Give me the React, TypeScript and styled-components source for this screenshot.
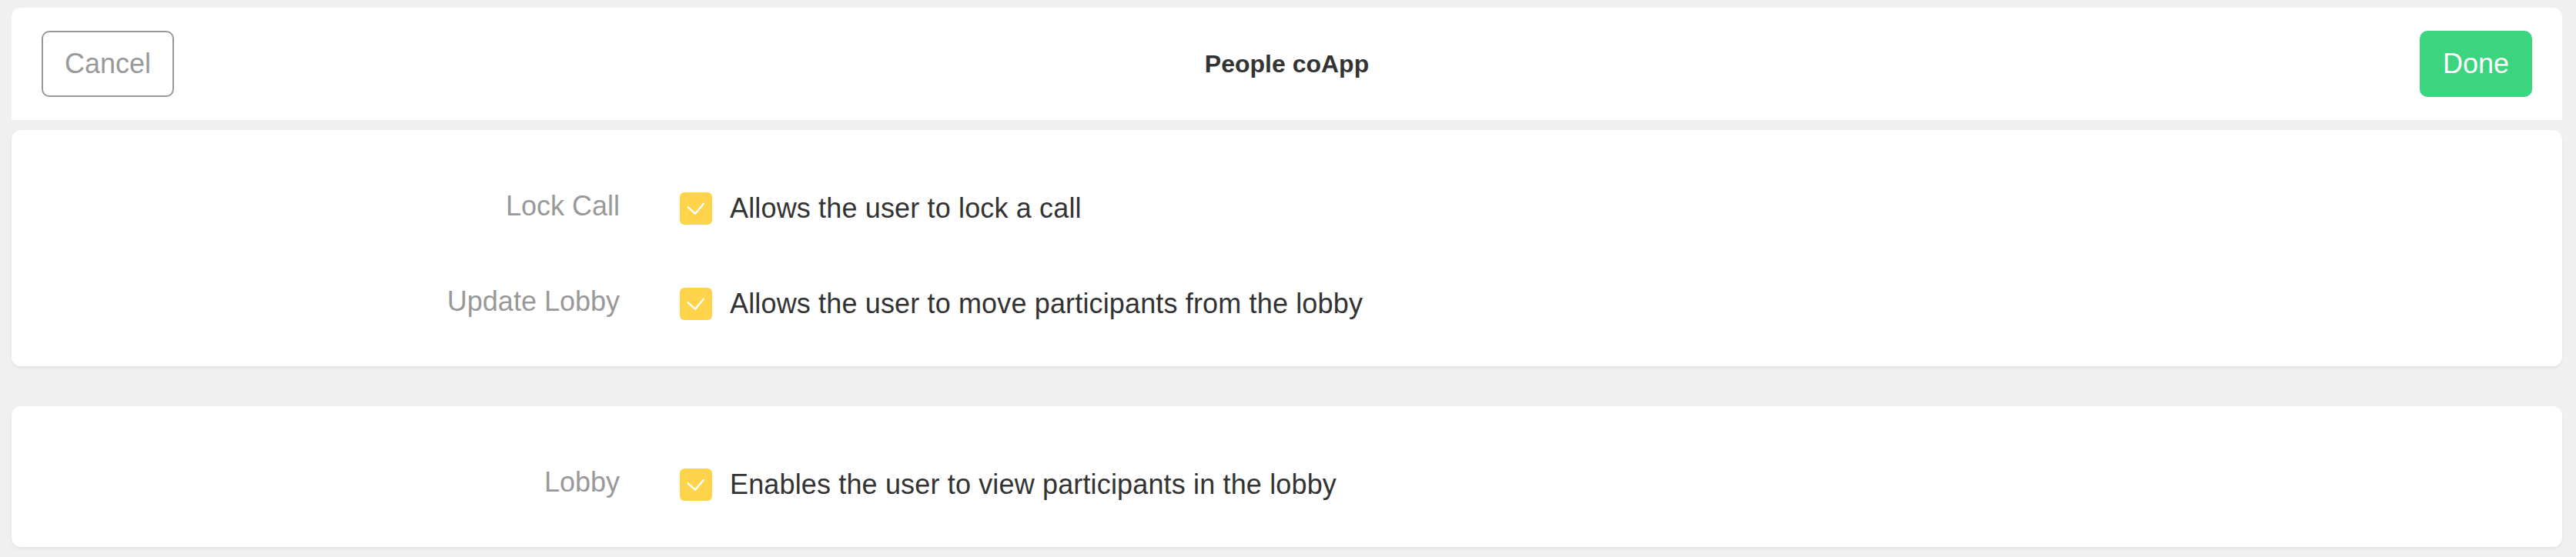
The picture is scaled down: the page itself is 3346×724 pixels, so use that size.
import styled, { createGlobalStyle } from "styled-components";

const GlobalStyle = createGlobalStyle`
  html, body {
    margin: 0;
    padding: 0;
    background: #f0f0f0;
  }
  body {
    font-family: "Liberation Sans", Helvetica, Arial, sans-serif;
  }
  * {
    box-sizing: border-box;
  }
`;

const Page = styled.main`
  padding: 10px 18px 13px 15px;
  display: flex;
  flex-direction: column;
`;

// --- Top bar ---

const TopBar = styled.header`
  height: 146px;
  background: #ffffff;
  border-radius: 12px 12px 0 0;
  padding: 0 39px;
  display: grid;
  grid-template-columns: 1fr auto 1fr;
  align-items: center;
`;

const Title = styled.h1`
  margin: 0;
  font-size: 32px;
  font-weight: 700;
  color: #333333;
`;

const Button = styled.button<{ $primary?: boolean }>`
  height: 86px;
  font-family: inherit;
  font-size: 36px;
  border-radius: 10px;
  cursor: pointer;
  padding: 0 ${(p) => (p.$primary ? "30px" : "28px")};
  border: ${(p) => (p.$primary ? "none" : "2px solid #999999")};
  background: ${(p) => (p.$primary ? "#3bd47f" : "#ffffff")};
  color: ${(p) => (p.$primary ? "#ffffff" : "#999999")};
`;

const Left = styled.div`
  justify-self: start;
`;

const Right = styled.div`
  justify-self: end;
`;

// --- Permission cards ---

const Card = styled.section<{ $gapTop: number }>`
  margin-top: ${(p) => p.$gapTop}px;
  background: #ffffff;
  border-radius: 12px;
  box-shadow: 0 2px 4px rgba(0, 0, 0, 0.06);
  padding: 81px 0 60px;
  display: flex;
  flex-direction: column;
  gap: 82px;
`;

const Row = styled.div`
  display: flex;
  align-items: center;
  height: 42px;
`;

const Label = styled.div`
  width: 790px;
  text-align: right;
  font-size: 36px;
  color: #999999;
  padding-bottom: 6px;
`;

const Option = styled.label`
  margin-left: 78px;
  display: flex;
  align-items: center;
  gap: 23px;
  font-size: 36px;
  letter-spacing: 0.15px;
  color: #333333;
`;

const Box = styled.span`
  width: 42px;
  height: 42px;
  border-radius: 6px;
  background: #ffd44b;
  display: flex;
  align-items: center;
  justify-content: center;
  flex-shrink: 0;
`;

function Check() {
  return (
    <Box>
      <svg width="42" height="42" viewBox="0 0 42 42">
        <path
          d="M10.7 19.3 L20 27.7 L30.7 15"
          fill="none"
          stroke="#ffffff"
          strokeWidth="2.4"
          strokeLinecap="round"
          strokeLinejoin="round"
        />
      </svg>
    </Box>
  );
}

const groups = [
  [
    { label: "Lock Call", text: "Allows the user to lock a call" },
    { label: "Update Lobby", text: "Allows the user to move participants from the lobby" },
  ],
  [{ label: "Lobby", text: "Enables the user to view participants in the lobby" }],
];

export default function App() {
  return (
    <>
      <GlobalStyle />
      <Page>
        <TopBar>
          <Left>
            <Button>Cancel</Button>
          </Left>
          <Title>People coApp</Title>
          <Right>
            <Button $primary>Done</Button>
          </Right>
        </TopBar>

        {groups.map((rows, i) => (
          <Card key={i} $gapTop={i === 0 ? 13 : 52}>
            {rows.map((row) => (
              <Row key={row.label}>
                <Label>{row.label}</Label>
                <Option>
                  <Check />
                  {row.text}
                </Option>
              </Row>
            ))}
          </Card>
        ))}
      </Page>
    </>
  );
}
